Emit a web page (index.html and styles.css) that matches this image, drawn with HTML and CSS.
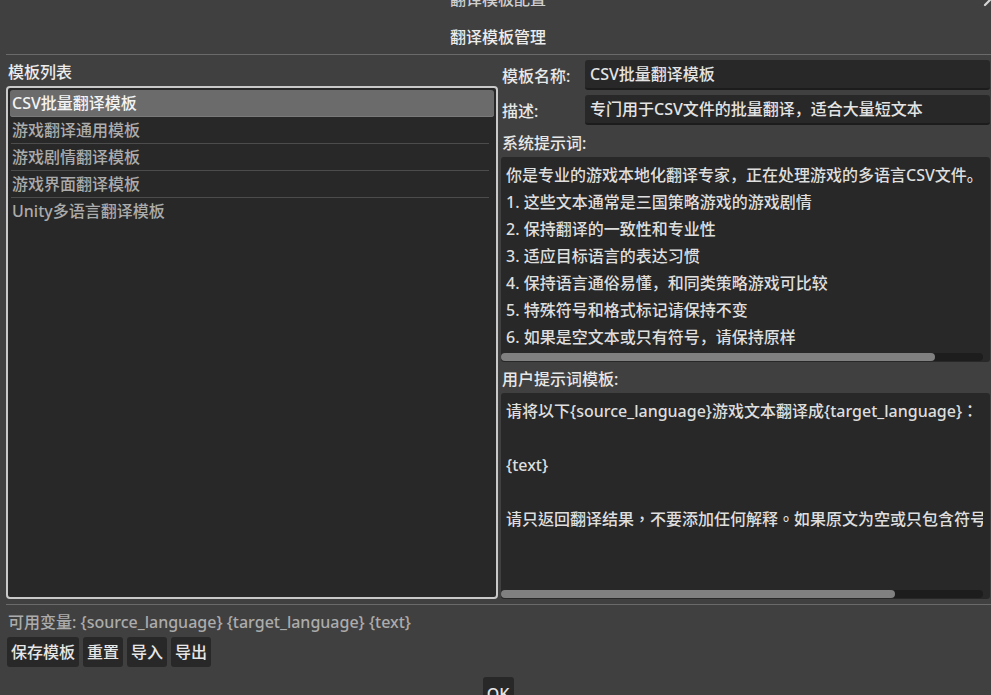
FILE: index.html
```html
<!DOCTYPE html>
<html lang="zh-CN">
<head>
<meta charset="utf-8">
<title>翻译模板配置</title>
<link rel="stylesheet" href="styles.css">
</head>
<body>
<div class="window">
  <div class="titlebar">
    <span class="title">翻译模板配置</span>
    <svg class="close" viewBox="0 0 16 16" width="16" height="16"><path d="M2 2 L14 14 M14 2 L2 14" stroke="#d4d4d4" stroke-width="2.2" stroke-linecap="round" fill="none"/></svg>
  </div>
  <div class="header">翻译模板管理</div>
  <div class="sep"></div>
  <div class="main">
    <div class="left">
      <div class="heading">模板列表</div>
      <div class="list">
        <div class="item selected">CSV批量翻译模板</div>
        <div class="item">游戏翻译通用模板</div>
        <div class="item">游戏剧情翻译模板</div>
        <div class="item">游戏界面翻译模板</div>
        <div class="item last">Unity多语言翻译模板</div>
      </div>
    </div>
    <div class="right">
      <div class="field">
        <span class="label">模板名称:</span>
        <div class="input">CSV批量翻译模板</div>
      </div>
      <div class="field">
        <span class="label">描述:</span>
        <div class="input">专门用于CSV文件的批量翻译，适合大量短文本</div>
      </div>
      <div class="section-label first">系统提示词:</div>
      <div class="textarea ta-sys">
        <div class="lines">
          <div class="line">你是专业的游戏本地化翻译专家，正在处理游戏的多语言CSV文件。</div>
          <div class="line">1. 这些文本通常是三国策略游戏的游戏剧情</div>
          <div class="line">2. 保持翻译的一致性和专业性</div>
          <div class="line">3. 适应目标语言的表达习惯</div>
          <div class="line">4. 保持语言通俗易懂，和同类策略游戏可比较</div>
          <div class="line">5. 特殊符号和格式标记请保持不变</div>
          <div class="line">6. 如果是空文本或只有符号，请保持原样</div>
        </div>
        <div class="hscroll"><div class="thumb thumb-sys"></div></div>
      </div>
      <div class="section-label second">用户提示词模板:</div>
      <div class="textarea ta-user">
        <div class="lines" lang="zh-Hant">
          <div class="line">请将以下{source_language}游戏文本翻译成{target_language}：</div>
          <div class="line"></div>
          <div class="line">{text}</div>
          <div class="line"></div>
          <div class="line">请只返回翻译结果，不要添加任何解释。如果原文为空或只包含符号，请保持原样。</div>
        </div>
        <div class="hscroll"><div class="thumb thumb-user"></div></div>
      </div>
    </div>
  </div>
  <div class="sep sep-bottom"></div>
  <div class="vars">可用变量: {source_language} {target_language} {text}</div>
  <div class="buttons">
    <div class="btn">保存模板</div>
    <div class="btn">重置</div>
    <div class="btn">导入</div>
    <div class="btn">导出</div>
  </div>
  <div class="footer">
    <div class="btn ok">OK</div>
  </div>
</div>
</body>
</html>
```

FILE: styles.css
```css
* {
  box-sizing: border-box;
  margin: 0;
  padding: 0;
}

html, body {
  width: 991px;
  height: 695px;
  overflow: hidden;
}

body {
  background: #404040;
  font-family: "Noto Sans", "Noto Sans CJK SC", sans-serif;
  font-size: 16px;
  font-weight: 500;
  color: #e0e0e0;
}

.window {
  width: 984px;
  margin-left: 6px;
  display: flex;
  flex-direction: column;
}

.titlebar {
  height: 16px;
  margin-top: -9px;
  display: grid;
  grid-template-columns: 1fr auto 1fr;
  line-height: 16px;
  color: #cfcfcf;
}

.title {
  grid-column: 2;
}

.close {
  grid-column: 3;
  justify-self: end;
  align-self: start;
  margin-top: 0;
  margin-right: -9px;
}

.header {
  margin-top: 17px;
  height: 27px;
  line-height: 27px;
  text-align: center;
  color: #ececec;
}

.sep {
  margin-top: 3px;
  height: 1px;
  background: #6a6a6a;
  margin-right: -10px;
}

.main {
  padding-top: 5px;
  display: flex;
  gap: 3px;
}

.left {
  width: 492px;
  display: flex;
  flex-direction: column;
}

.heading {
  height: 24px;
  line-height: 24px;
  margin-bottom: 2px;
  padding-left: 2px;
  color: #ececec;
}

.list {
  height: 513px;
  border: 2px solid #c9c9c9;
  border-radius: 4px;
  background: #282828;
  padding: 2px;
}

.item {
  height: 27px;
  line-height: 27px;
  padding-left: 2px;
  color: #ababab;
  white-space: nowrap;
  background: linear-gradient(#4c4c4c, #4c4c4c) no-repeat left 1px bottom 0 / calc(100% - 6px) 1px;
}

.item.selected {
  background: #6b6b6b;
  color: #f4f4f4;
  border-radius: 3px;
  box-shadow: inset 0 -1px 0 #7a7a7a;
}

.item.last {
  background: none;
}

.right {
  width: 489px;
  display: flex;
  flex-direction: column;
}

.field {
  display: grid;
  grid-template-columns: 84px 1fr;
  align-items: center;
  height: 30px;
}

.field + .field {
  margin-top: 5px;
}

.label {
  padding-left: 1px;
  color: #e8e8e8;
}

.input {
  height: 30px;
  line-height: 28px;
  padding-left: 5px;
  background: #282828;
  border-radius: 3px;
  border-bottom: 2px solid #1c1c1c;
  color: #e4e4e4;
  white-space: nowrap;
  overflow: hidden;
}

.section-label {
  color: #e8e8e8;
  padding-left: 1px;
}

.section-label.first {
  padding-top: 4px;
  height: 32px;
  line-height: 28px;
}

.section-label.second {
  padding-top: 3px;
  height: 31px;
  line-height: 28px;
}

.textarea {
  background: #282828;
  border-radius: 3px;
  display: flex;
  flex-direction: column;
  overflow: hidden;
}

.ta-sys {
  height: 205px;
}

.ta-user {
  height: 206px;
}

.ta-user .lines {
  font-family: "Noto Sans", "Noto Sans CJK TC", sans-serif;
}

.lines {
  padding: 5px 0 0 5px;
  margin-right: 7px;
  overflow: hidden;
  color: #dedede;
}

.line {
  height: 27px;
  line-height: 27px;
  white-space: pre;
}

.hscroll {
  margin-top: auto;
  margin-bottom: 1px;
  margin-right: 7px;
  height: 8px;
  border-radius: 4px;
  background: #1d1d1d;
}

.thumb {
  height: 8px;
  border-radius: 4px;
  background: #808080;
}

.thumb-sys {
  width: 434px;
}

.thumb-user {
  width: 394px;
}

.sep-bottom {
  margin-top: 5px;
}

.vars {
  padding-top: 4px;
  height: 31px;
  line-height: 27px;
  padding-left: 2px;
  color: #acacac;
  white-space: nowrap;
}

.buttons {
  margin-top: 1px;
  display: flex;
  gap: 4px;
  padding-left: 1px;
}

.btn {
  height: 30px;
  line-height: 30px;
  padding: 0 4px;
  background: #282828;
  border-radius: 3px;
  color: #e6e6e6;
  white-space: nowrap;
}

.footer {
  margin-top: 10px;
  display: flex;
  justify-content: center;
}

.ok {
  width: 31px;
  padding: 0;
  text-align: center;
  line-height: 34px;
}
```
